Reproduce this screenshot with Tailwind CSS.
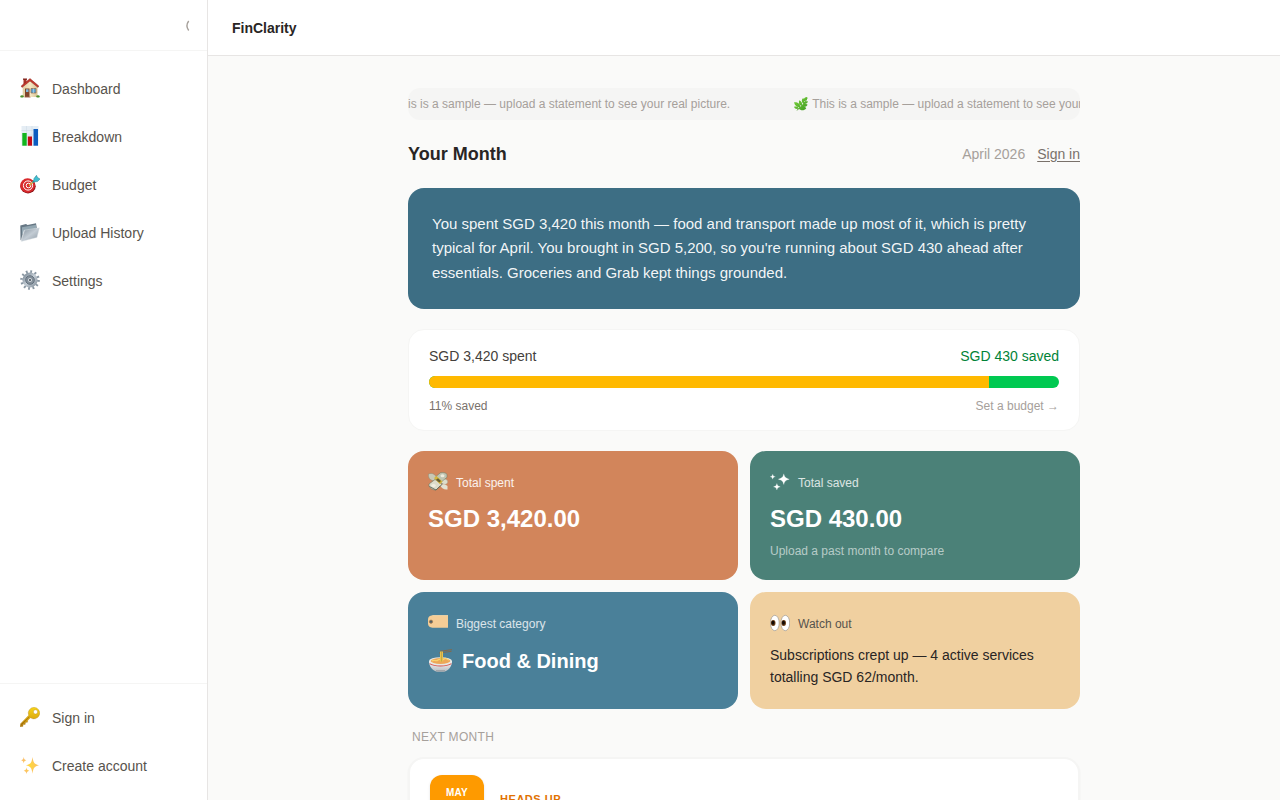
<!DOCTYPE html>
<html lang="en">
<head>
<meta charset="utf-8">
<meta name="viewport" content="width=device-width, initial-scale=1">
<title>FinClarity</title>
<script src="https://cdn.jsdelivr.net/npm/@tailwindcss/browser@4"></script>
</head>
<body class="flex h-screen overflow-hidden bg-stone-50 font-['Liberation_Sans',Arial,sans-serif] text-stone-800">

<!-- Shared icon paint and symbols -->
<svg class="absolute size-0" aria-hidden="true">
  <defs>
    <linearGradient id="wall" x1="0" x2="1"><stop offset="0" stop-color="#e2cda0"/><stop offset=".5" stop-color="#f6e8c4"/><stop offset="1" stop-color="#d8c296"/></linearGradient>
    <linearGradient id="steel" x1="0" y1="0" x2="1" y2="1"><stop offset="0" stop-color="#7f8d99"/><stop offset=".5" stop-color="#c3ccd4"/><stop offset="1" stop-color="#8c98a3"/></linearGradient>
    <linearGradient id="gold" x1="0" y1="0" x2="0" y2="1"><stop offset="0" stop-color="#f7d417"/><stop offset=".6" stop-color="#dca90f"/><stop offset="1" stop-color="#a97410"/></linearGradient>
    <radialGradient id="glow"><stop offset="0" stop-color="#ffd83a"/><stop offset="1" stop-color="#fbbf6a"/></radialGradient>
    <linearGradient id="bowl" x1="0" y1="0" x2="0" y2="1"><stop offset="0" stop-color="#fafafa"/><stop offset="1" stop-color="#b9bcc0"/></linearGradient>
    <linearGradient id="leaf" x1="0" y1="0" x2="1" y2="1"><stop offset="0" stop-color="#7ed63d"/><stop offset="1" stop-color="#3f9a22"/></linearGradient>
    <symbol id="herb" viewBox="0 0 20 20">
      <path d="M18.500 2C16 9 11 14 4 19" fill="none" stroke="#4b9a26" stroke-width="1.200"/>
      <g fill="url(#leaf)"><path d="M19 0c-3.500 0-5.500 2-5 6C17.500 5.500 19.500 4 19 0ZM13 1.500c-2.500 2-2.500 5.500 0 8 2.500-2.500 2.500-5.500 0-8ZM7.500 4.500c-1.500 3.500 0 7 3.500 8.500C12.500 9 11 6 7.500 4.500ZM0 7.500c1 5 4 7 9 7C9 10 5.500 7 0 7.500ZM20 6.500c-3.500-1-6 0-7 3 3.500 1 6 0 7-3ZM19.500 11c-3-2-7-2-9 2 3 2 7 1.500 9-2ZM17.500 16c-3-3.500-8-3.500-11 0 3 4 8 4 11 0ZM0 14c1 3 4 4 7 2.500-1-2.500-3.500-4-7-2.500Z"/></g>
    </symbol>
  </defs>
</svg>

<aside class="flex w-52 shrink-0 flex-col border-r border-stone-200 bg-white">
  <div class="flex h-[51px] items-center justify-end border-b border-stone-100 px-4">
    <button type="button" aria-label="Collapse sidebar" class="text-stone-400">
      <svg class="h-3 w-2" viewBox="0 0 8 12" fill="none" stroke="currentColor" stroke-width="1.400"><path d="M5.700 2C3.500 5 3.500 8.500 5.700 11.500"/></svg>
    </button>
  </div>

  <nav aria-label="Main" class="flex flex-1 flex-col gap-1 px-2 py-4 text-sm text-stone-600">
    <a href="#dashboard" class="flex h-11 items-center gap-3 rounded-xl px-3">
      <svg class="size-5 -translate-y-px" viewBox="0 0 20 20">
        <path d="M3.500 1h3v5h-3z" fill="#a8352a"/><path d="M3 .5h4v1.300H3z" fill="#7e211a"/>
        <path d="M2.700 9 10 3l7.500 6v10H2.700z" fill="url(#wall)"/>
        <path d="M10 .6 1.200 8l.8 1.400L10 3l8 6.400.8-1.400z" fill="#c63a2e" stroke="#8b2119" stroke-width=".5"/>
        <path d="M5 10.500h4.500V19H5z" fill="#81452b"/><path d="M6 11.300h2.500v2.700H6z" fill="#80b9db"/>
        <path d="M11 10.500h5v4.500h-5z" fill="#5ca4d3" stroke="#8f6848" stroke-width=".7"/><path d="M13.500 10.500v4.500" stroke="#cde8f7" stroke-width=".5"/>
        <ellipse cx="2" cy="18.400" rx="1.700" ry="1.200" fill="#4c8f2d"/><ellipse cx="18" cy="18.400" rx="1.700" ry="1.200" fill="#4c8f2d"/><path d="M4.500 18.700h6v.8h-6z" fill="#a66b50"/>
      </svg>Dashboard</a>
    <a href="#breakdown" class="flex h-11 items-center gap-3 rounded-xl px-3">
      <svg class="size-5 -translate-y-px" viewBox="0 0 20 20">
        <path d="M1.500 0h17v20h-17z" fill="#e5edf4"/><path d="M1.500 4.500h17M1.500 9h17M1.500 14h17M6.500 0v20M12 0v20" stroke="#cad9e4" stroke-width=".5"/>
        <path d="M2.300 7h4.400v12.700H2.300z" fill="#12b51e"/><path d="M7.800 10.500H12v9.200H7.800z" fill="#c40b16"/><path d="M13.500 3H18v16.700h-4.500z" fill="#0c5cc0"/>
      </svg>Breakdown</a>
    <a href="#budget" class="flex h-11 items-center gap-3 rounded-xl px-3">
      <svg class="size-5" viewBox="0 0 20 20">
        <ellipse cx="8" cy="11.200" rx="7.700" ry="7.300" fill="#8d1519"/><ellipse cx="7.600" cy="10.500" rx="7.400" ry="7.200" fill="#d92a2d"/>
        <g fill="none" stroke="#fff" stroke-width="1"><circle cx="8" cy="10.500" r="4.600"/><circle cx="8.500" cy="10.500" r="2.300"/></g>
        <path d="m9 10.500 7-6" stroke="#d0b038" stroke-width="1.600"/><path d="m12.500 7.500 5-4.500" stroke="#218d9f" stroke-width="1.500"/>
        <path d="m14 3.500 2.500-3.200 1 2.200 2.500 1.500-2.500 2.500-4 .5z" fill="#42bfd0" stroke="#237f91" stroke-width=".5"/>
      </svg>Budget</a>
    <a href="#history" class="flex h-11 items-center gap-3 rounded-xl px-3">
      <svg class="size-5 -translate-y-px" viewBox="0 0 20 20">
        <path d="M.3 3.500 6 2l1.500 1L16 1.200l.8 4.800L2 18.700l-1.500-.8z" fill="#667784"/>
        <path d="M2 5.300 16 2.800v4L2 12z" fill="#92a6b1"/>
        <path d="M4.300 8.200 19.500 5.700 17 15.500 1.300 19.500z" fill="url(#steel)" stroke="#e6eaed" stroke-width=".4"/>
        <path d="M1 18.800 4.300 8.200" stroke="#f5f7f8" stroke-width=".6"/>
      </svg>Upload History</a>
    <a href="#settings" class="flex h-11 items-center gap-3 rounded-xl px-3">
      <svg class="size-5 -translate-y-px" viewBox="0 0 20 20">
        <circle cx="10" cy="10" r="8.400" fill="none" stroke="#8997a3" stroke-width="2.800" stroke-dasharray="1.800 2.598"/>
        <circle cx="10" cy="10" r="6" fill="none" stroke="url(#steel)" stroke-width="3.200"/>
        <circle cx="10" cy="10" r="4.300" fill="#8a96a0" stroke="#536270" stroke-width=".9"/>
        <circle cx="10" cy="10" r="2.500" fill="#d5dbe0" stroke="#6d7a85" stroke-width=".8"/><circle cx="10" cy="10" r="1" fill="#3e4a55"/>
      </svg>Settings</a>
  </nav>

  <nav aria-label="Account" class="flex flex-col gap-1 border-t border-stone-100 px-2 py-3 text-sm text-stone-600">
    <a href="#signin" class="flex h-11 items-center gap-3 rounded-xl px-3">
      <svg class="size-5 -translate-y-px" viewBox="0 0 20 20">
        <path fill-rule="evenodd" fill="url(#gold)" stroke="#a87810" stroke-width=".3" d="M14 .3a5.800 5.800 0 0 0-5.300 8L.5 16.800 0 19.800l2.800-.2.400-2 2-.2.300-2 2-.2.300-2 2.700-2.400A5.800 5.800 0 1 0 14 .3Zm1.500 2.500a2.100 2.100 0 1 1 0 4.200 2.100 2.100 0 0 1 0-4.200Z"/>
        <path d="m1.300 17.700 8-7.800" stroke="#8f620d" stroke-width=".7"/>
      </svg>Sign in</a>
    <a href="#register" class="flex h-11 items-center gap-3 rounded-xl px-3">
      <svg class="size-5" viewBox="0 0 20 20" fill="url(#glow)">
        <path d="M12.500 1c.8 5.500 1.800 7.300 6.500 8.300-4.700 1-5.700 2.900-6.500 8.400-.8-5.500-1.800-7.400-6.500-8.400 4.700-1 5.700-2.800 6.500-8.300ZM3.700.8C4 3 4.500 3.800 6.300 4.200 4.500 4.600 4 5.400 3.700 7.600 3.400 5.400 2.900 4.600 1.100 4.200 2.900 3.800 3.400 3 3.700.8ZM6.500 11.500c.3 2 1 2.800 2.800 3.200-1.800.4-2.500 1.200-2.800 3.300-.3-2.100-1-2.900-2.800-3.300 1.800-.4 2.500-1.200 2.800-3.200Z"/>
      </svg>Create account</a>
  </nav>
</aside>

<div class="flex min-w-0 flex-1 flex-col">
  <header class="flex h-14 shrink-0 items-center border-b border-stone-200 bg-white px-6">
    <span class="text-sm font-bold text-stone-800">FinClarity</span>
  </header>

  <main class="flex-1 overflow-y-auto px-4 py-8 [scrollbar-width:none]">
    <div class="mx-auto flex max-w-2xl flex-col gap-5">

      <div class="flex h-8 items-center overflow-hidden rounded-xl bg-stone-100 text-xs text-stone-400">
        <div class="-ml-8 flex shrink-0 gap-16 whitespace-nowrap">
          <span class="flex items-center gap-1"><svg class="size-3.5"><use href="#herb"/></svg>This is a sample — upload a statement to see your real picture.</span>
          <span class="flex items-center gap-1"><svg class="size-3.5"><use href="#herb"/></svg>This is a sample — upload a statement to see your real picture.</span>
        </div>
      </div>

      <div class="flex h-7 items-center justify-between">
        <h1 class="text-lg font-bold">Your Month</h1>
        <div class="flex items-center gap-3 text-sm">
          <span class="text-stone-400">April 2026</span>
          <a href="#signin" class="text-stone-500 underline underline-offset-2">Sign in</a>
        </div>
      </div>

      <p class="rounded-2xl bg-[#3d6e84] p-6 text-[15px] leading-relaxed text-white/95">You spent SGD 3,420 this month — food and transport made up most of it, which is pretty typical for April. You brought in SGD 5,200, so you're running about SGD 430 ahead after essentials. Groceries and Grab kept things grounded.</p>

      <section class="flex flex-col gap-2.5 rounded-2xl border border-stone-100 bg-white px-5 py-4">
        <div class="flex justify-between text-sm">
          <span class="text-stone-700">SGD 3,420 spent</span>
          <span class="text-green-700">SGD 430 saved</span>
        </div>
        <div class="flex h-3 overflow-hidden rounded-full bg-green-500">
          <div class="bg-amber-400" style="width:88.9%"></div>
        </div>
        <div class="flex justify-between text-xs">
          <span class="text-stone-500">11% saved</span>
          <a href="#budget" class="text-stone-400">Set a budget →</a>
        </div>
      </section>

      <div class="grid grid-cols-2 gap-3">
        <section class="flex flex-col gap-2 rounded-2xl bg-[#d2855b] p-5 text-white">
          <h2 class="flex h-6 items-center gap-2 text-xs text-white/90">
            <svg class="size-5 -translate-y-px" viewBox="0 0 20 20">
              <path d="M.5 2C4 .5 7 2 9 6L6 9C2 8 0 6 .5 2Z" fill="#c9c8b5" stroke="#8c8b76" stroke-width=".5"/><path d="M11 7c2-1 5-1 8 1 1.500 2 .5 4-2 4.500-3-.5-5-2-6-5.500Z" fill="#deddca" stroke="#a3a28d" stroke-width=".5"/>
              <path d="m8.500 4 4-3.300c3-.5 5 0 6.500 1.600v3L12 11 7 7.500z" fill="#bfc4b2" stroke="#6d765f" stroke-width=".5"/>
              <path d="m1 12 6-4.500L14 12l-6 6c-3 0-6-1.500-7-4z" fill="#dddccb" stroke="#6d765f" stroke-width=".6"/>
              <path d="M12 13c2-1 5-1 7.500 1v3.500C16 18 13 16 12 13Z" fill="#e3e2d2"/><ellipse cx="14.500" cy="3.700" rx="2" ry="1.500" fill="#edebdc"/><ellipse cx="5.500" cy="13.500" rx="2.200" ry="1.500" fill="#f0eee0"/>
              <path d="m6 6 2.500-2 6 5.500-2.500 2.700z" fill="#d6b63a"/><path d="m8 7.700 2-1.500 3 2.800-1.700 1.500z" fill="#655d35"/><path d="M1.500 14.500 8 18l6.500-6" stroke="#545f52" stroke-width=".8" fill="none"/>
            </svg>Total spent</h2>
          <p class="text-2xl font-bold">SGD 3,420.00</p>
        </section>

        <section class="flex flex-col gap-2 rounded-2xl bg-[#4b8178] p-5 text-white">
          <h2 class="flex h-6 items-center gap-2 text-xs text-white/80">
            <svg class="size-5" viewBox="0 0 20 20" fill="#fff" stroke="#fff" stroke-width=".2" stroke-linejoin="round">
              <path d="M13.800.8c.8 3.400 1.700 4.300 5.500 5.400-3.800 1.100-4.700 2-5.500 5.400-.8-3.400-1.700-4.300-5.500-5.400 3.800-1.100 4.700-2 5.500-5.400ZM2.700 1.200c.4 1.700.9 2.100 2.600 2.500-1.700.4-2.200.9-2.600 2.500-.4-1.600-.9-2.100-2.600-2.500 1.700-.4 2.200-.8 2.600-2.500ZM6.900 10.500c.5 2.200 1.100 2.700 3.400 3.300-2.300.6-2.900 1.100-3.400 3.200-.5-2.100-1.100-2.600-3.400-3.200 2.300-.6 2.900-1.100 3.400-3.300Z"/>
            </svg>Total saved</h2>
          <p class="text-2xl font-bold">SGD 430.00</p>
          <p class="text-xs/[17px] text-white/60">Upload a past month to compare</p>
        </section>

        <section class="flex flex-col gap-2 rounded-2xl bg-[#4a8099] p-5 text-white">
          <h2 class="flex h-6 items-center gap-2 text-xs text-white/80">
            <svg class="size-5" viewBox="0 0 20 20">
              <path fill="#f5cd96" d="M4.500 1.300H20v12.400H4.500C1.500 13.500 0 12 0 9.500v-4C0 3 1.500 1.500 4.500 1.300Z"/><circle cx="3" cy="7.700" r="1.600" fill="#51616a" stroke="#a2794b" stroke-width=".8"/><path d="M4.500 1.600H20" stroke="#ffe0b0" stroke-width=".6"/>
            </svg>Biggest category</h2>
          <p class="flex items-center gap-2.5 pt-[3px] text-xl/7 font-bold">
            <svg class="size-6" viewBox="0 0 24 24">
              <path d="M12 2.300 24 .6M11 4l12.500-1.700" stroke="#80694e" stroke-width="1"/>
              <path d="M1 12c0 6 4 10 8 10.700h7c4-.7 8-4.700 8-10.700Z" fill="url(#bowl)"/>
              <ellipse cx="12.500" cy="12" rx="11.500" ry="3.800" fill="#e9e9e5"/><ellipse cx="12.500" cy="12" rx="9.800" ry="2.900" fill="#eda757"/>
              <path d="M4 12c2-2 4 1 6-1s4 1 6-1 3 1 5 1" fill="none" stroke="#f9d36f" stroke-width="1.200"/>
              <path d="M12 2.500h3v10h-3z" fill="#e8c34c"/><path d="M13.500 2.500v10" stroke="#a8964a" stroke-width=".6"/>
              <path d="M1.600 14.600c5 3.200 16.800 3.200 21.800 0" fill="none" stroke="#d9534a" stroke-width="1.100"/><path d="M8 21.800h9" stroke="#96999d" stroke-width="1"/>
            </svg>Food &amp; Dining</p>
        </section>

        <section class="flex flex-col gap-2 rounded-2xl bg-[#f0d0a0] px-5 pt-5 pb-[21px]">
          <h2 class="flex h-6 items-center gap-2 text-xs text-stone-600">
            <svg class="size-5 -translate-y-px" viewBox="0 0 20 20">
              <g fill="#fff" stroke="#8f8b86" stroke-width=".6"><ellipse cx="4.800" cy="10" rx="4.400" ry="7.700"/><ellipse cx="15.300" cy="10" rx="4.400" ry="7.700"/></g>
              <g fill="#6c3e16"><ellipse cx="3.200" cy="10" rx="2.300" ry="2.900"/><ellipse cx="13.700" cy="10" rx="2.300" ry="2.900"/></g>
              <g fill="#120a05"><ellipse cx="3" cy="9.800" rx="1.500" ry="2"/><ellipse cx="13.500" cy="9.800" rx="1.500" ry="2"/></g>
            </svg>Watch out</h2>
          <p class="text-sm/[22px] text-stone-800">Subscriptions crept up — 4 active services totalling SGD 62/month.</p>
        </section>
      </div>

      <section class="flex flex-col gap-3">
        <h2 class="px-1 text-xs tracking-wide text-stone-400 uppercase">Next month</h2>
        <article class="flex gap-4 rounded-2xl border-2 border-stone-100 bg-white px-5 py-4 shadow-xs">
          <div class="h-16 w-[54px] rounded-xl bg-amber-500 pt-2.5 text-center text-[10px]/4 font-bold tracking-wide text-white shadow-sm">MAY</div>
          <p class="pt-4 text-[11px]/4 font-bold tracking-wider text-amber-600">HEADS UP</p>
        </article>
      </section>
    </div>
  </main>
</div>
</body>
</html>
